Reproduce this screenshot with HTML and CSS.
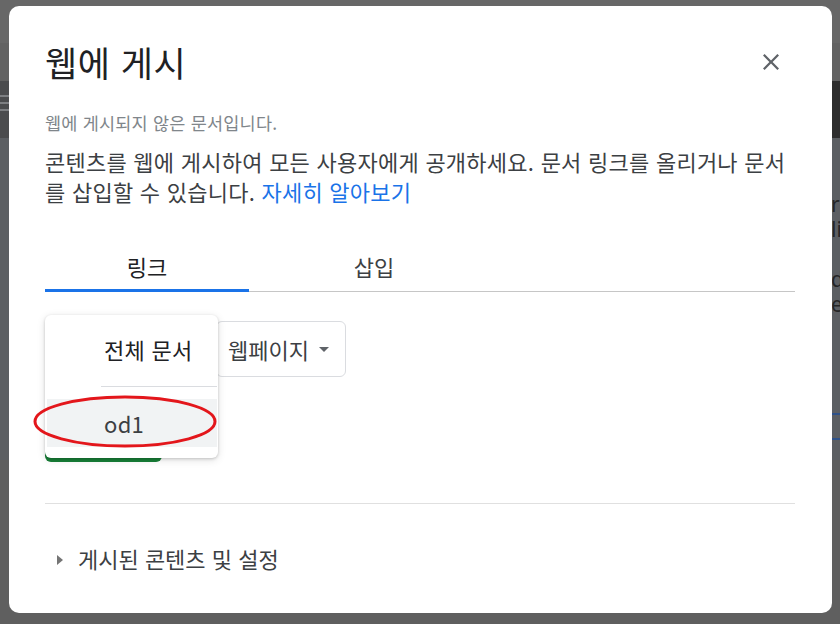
FILE: index.html
```html
<!DOCTYPE html>
<html lang="ko">
<head>
<meta charset="utf-8">
<title>웹에 게시</title>
<link rel="stylesheet" href="styles.css">
</head>
<body>
<div class="page">
  <div class="bar bar1"></div>
  <div class="bar bar2"></div>
  <div class="bar bar3">
    <div class="hamburger"><span></span><span></span><span></span></div>
  </div>
  <div class="doc">
    <div class="doc-left"></div>
    <div class="doc-right">
      <p>r</p><p>li</p><p>&nbsp;</p><p>d</p><p>e</p>
      <div class="blue-line first"></div>
      <div class="blue-line"></div>
    </div>
  </div>
</div>

<div class="dialog" role="dialog" aria-label="웹에 게시">
  <div class="header">
    <h1 class="title">웹에 게시</h1>
    <button class="close" aria-label="닫기">
      <svg viewBox="5 5 14 14" width="16" height="16"><path d="M19 6.41L17.59 5 12 10.59 6.41 5 5 6.41 10.59 12 5 17.59 6.41 19 12 13.41 17.59 19 19 17.59 13.41 12z" fill="#5f6368"/></svg>
    </button>
  </div>
  <p class="status">웹에 게시되지 않은 문서입니다.</p>
  <p class="desc">콘텐츠를 웹에 게시하여 모든 사용자에게 공개하세요. 문서 링크를 올리거나 문서를 삽입할 수 있습니다. <a href="#" class="link">자세히 알아보기</a></p>

  <div class="tabs">
    <div class="tab active">링크</div>
    <div class="tab">삽입</div>
  </div>

  <div class="controls">
    <div class="selects">
      <div class="select sel-doc">전체 문서 <span class="caret"></span></div>
      <div class="select sel-type">웹페이지 <span class="caret"></span></div>
    </div>
    <button class="publish">게시</button>

    <div class="menu" role="listbox">
      <div class="menu-item">전체 문서</div>
      <div class="menu-divider"></div>
      <div class="menu-item hover">od1</div>
    </div>
    <svg class="annot" width="188" height="61" viewBox="0 0 188 61">
      <ellipse cx="93" cy="30.5" rx="90" ry="24.5" fill="none" stroke="#e3161b" stroke-width="3"/>
    </svg>
  </div>

  <div class="sep"></div>
  <div class="expander"><span class="tri"></span>게시된 콘텐츠 및 설정</div>
</div>
</body>
</html>
```

FILE: styles.css
```css
* { box-sizing: border-box; }
html, body { margin: 0; padding: 0; }
body {
  width: 840px;
  height: 624px;
  overflow: hidden;
  background: #5f5f5f;
  font-family: "Noto Sans CJK KR", "Noto Sans", sans-serif;
  position: relative;
}

/* dimmed page behind the modal */
.page { width: 840px; }
.bar1 { height: 43px; background: #676767; }
.bar2 { height: 38px; background: #626262; }
.bar3 { height: 57px; background: #2e2e2e; position: relative; }
.hamburger {
  width: 9px; height: 57px; background: #4b4c4e;
  display: flex; flex-direction: column; gap: 5px; padding-top: 14px;
}
.hamburger span { display: block; height: 2px; background: #7d7f82; }
.doc { display: flex; height: 322px; background: #5c5f63; }
.doc-left { flex: 1; }
.doc-right {
  width: 9px; overflow: hidden; padding-top: 54px;
  font-family: "Noto Sans", sans-serif; font-size: 21px; color: #252627;
}
.doc-right p { margin: 0; line-height: 25px; white-space: nowrap; }
.blue-line { height: 2px; background: #2f5289; margin-top: 23px; }
.blue-line.first { margin-top: 96px; }

/* dialog */
.dialog {
  position: absolute;
  left: 9px;
  top: 6px;
  width: 823px;
  height: 607px;
  background: #fff;
  border-radius: 10px;
  padding: 34px 37px 0 36px;
}
.header {
  display: flex;
  align-items: center;
  justify-content: space-between;
  height: 44px;
}
.title {
  margin: 0;
  font-size: 35px;
  letter-spacing: 0.5px;
  line-height: 44px;
  font-weight: 400;
  color: #202124;
}
.close {
  border: 0; background: none; padding: 0;
  width: 40px; height: 40px;
  display: flex; align-items: center; justify-content: center;
  margin-right: 4px;
}
.status {
  margin: 27px 0 0;
  font-size: 17.5px;
  letter-spacing: 0.2px;
  line-height: 24px;
  color: #80868b;
}
.desc {
  margin: 11px 0 0;
  font-size: 22px;
  letter-spacing: 0.25px;
  line-height: 30px;
  color: #3c4043;
}
.link { color: #1a73e8; text-decoration: none; }

.tabs {
  margin-top: 34px;
  display: flex;
  height: 52px;
  position: relative;
  border-bottom: 1px solid #c6c6c6;
}
.tab {
  display: flex; align-items: center; justify-content: center;
  font-size: 22px;
  color: #3c4043;
  height: 52px;
}
.tab:first-child { width: 204px; }
.tab:nth-child(2) { width: 250px; }
.tab.active { color: #202124; border-bottom: 3px solid #1a73e8; padding-top: 2px; }
.tab:not(.active) { padding-bottom: 1px; }

.controls {
  position: relative;
  margin-top: 29px;
}
.selects { display: flex; gap: 10px; }
.select {
  height: 56px;
  border: 1px solid #dadce0;
  border-radius: 6px;
  display: flex; align-items: center; gap: 10px;
  padding: 0 13px 0 11px;
  font-size: 22px;
  color: #3c4043;
}
.sel-doc { width: 161px; }
.sel-type { width: 130px; }
.caret {
  width: 0; height: 0;
  border-left: 5.5px solid transparent;
  border-right: 5.5px solid transparent;
  border-top: 5px solid #5f6368;
}
.publish {
  display: block;
  margin-top: 41px;
  width: 117px; height: 44px;
  background: #188038;
  color: #fff;
  border: 0;
  border-radius: 6px;
  font-family: inherit;
  font-size: 21px;
}

.menu {
  position: absolute;
  left: 0;
  top: -6px;
  width: 173px;
  height: 143px;
  background: #fff;
  border-radius: 6px;
  box-shadow: 0 1px 3px rgba(0,0,0,0.18), 0 2px 8px rgba(0,0,0,0.12);
  padding: 10px 1px 0 2px;
  z-index: 2;
}
.menu-item {
  height: 48px;
  display: flex; align-items: center;
  padding-left: 57px;
  font-size: 22px;
  letter-spacing: 0.3px;
  color: #202124;
}
.menu-item.hover { background: #f1f3f4; color: #3c4043; }
.menu-divider {
  height: 1px;
  background: #dadce0;
  margin: 13px 0 12px 54px;
}
.annot {
  position: absolute;
  left: -13px;
  top: 70px;
  z-index: 3;
}

.sep {
  margin-top: 41px;
  height: 1px;
  background: #e0e0e0;
}
.expander {
  margin-top: 39px;
  display: flex; align-items: center;
  font-size: 22px;
  line-height: 30px;
  color: #3c4043;
}
.tri {
  width: 0; height: 0;
  margin: 3px 15px 0 12px;
  border-top: 5px solid transparent;
  border-bottom: 5px solid transparent;
  border-left: 6px solid #757575;
}
```
